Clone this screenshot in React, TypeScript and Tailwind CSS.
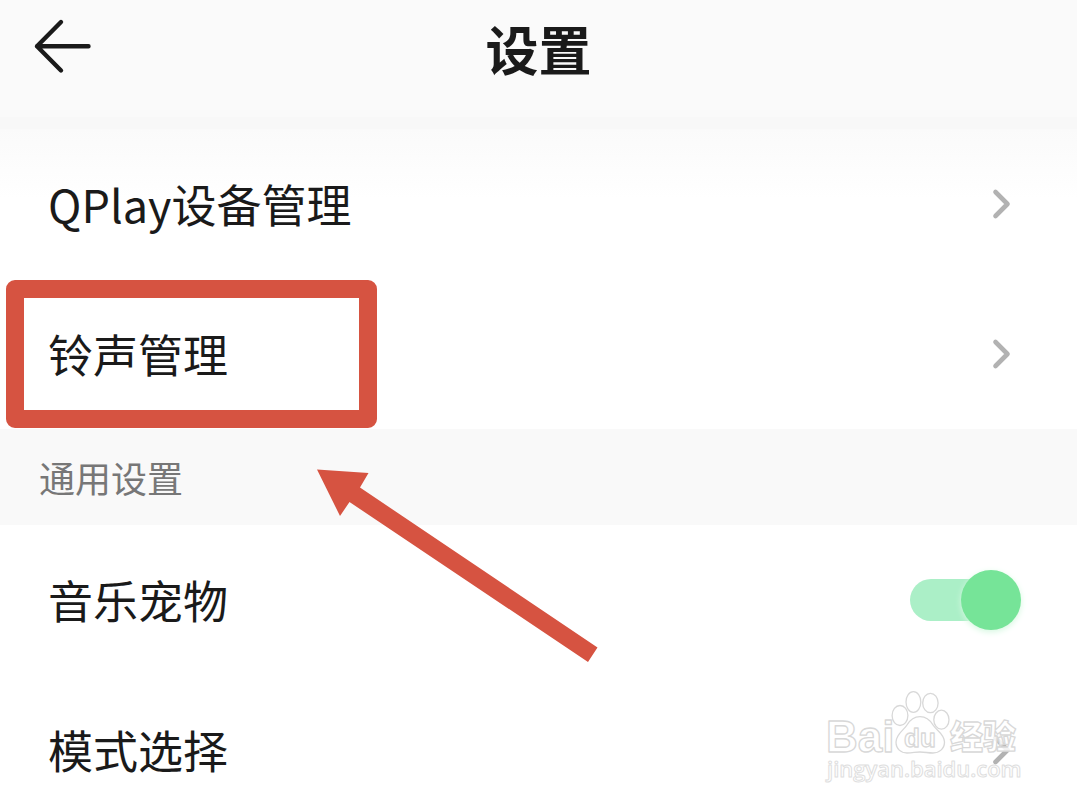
import clsx from "clsx";

const settingGroups = [
  {
    title: null,
    items: [
      { label: "QPlay设备管理", type: "link", marked: false },
      { label: "铃声管理", type: "link", marked: true },
    ],
  },
  {
    title: "通用设置",
    items: [
      { label: "音乐宠物", type: "switch", marked: false },
      { label: "模式选择", type: "link", marked: false },
    ],
  },
];

function Chevron() {
  return (
    <svg
      viewBox="0 0 40 40"
      className="size-10 shrink-0"
      fill="none"
      stroke="#b2b2b2"
      strokeWidth="4.6"
      strokeLinecap="round"
      strokeLinejoin="round"
      aria-hidden="true"
    >
      <path d="M14.500 8 26.500 20 14.500 32" />
    </svg>
  );
}

function Header() {
  return (
    <header className="relative flex h-[117px] items-start justify-center bg-[#fafafa] pt-2.5">
      <button
        type="button"
        aria-label="返回"
        className="absolute left-8 top-4 size-[60px] cursor-pointer"
      >
        <svg
          viewBox="0 0 60 60"
          className="size-full"
          fill="none"
          stroke="#1a1a1a"
          strokeWidth="4.4"
          strokeLinecap="round"
          strokeLinejoin="round"
        >
          <path d="M29 6 5 30.300 29 54.500M5 30.300H56.500" />
        </svg>
      </button>
      <h1 className="text-[53px] leading-[76px] font-bold">设置</h1>
    </header>
  );
}

function SettingRow({ label, type, marked }: { label: string; type: string; marked: boolean }) {
  const rowClass = clsx(
    "relative flex h-[150px] items-center justify-between pl-12 pr-14 text-[45px] leading-[66px]"
  );

  if (type === "switch") {
    return (
      <label className={rowClass}>
        <span>{label}</span>
        <input
          type="checkbox"
          role="switch"
          defaultChecked
          className="relative h-[60px] w-[111px] shrink-0 cursor-pointer appearance-none before:absolute before:left-0 before:top-[9px] before:h-[42px] before:w-[100px] before:rounded-full before:bg-gray-200 after:absolute after:left-0 after:top-0 after:size-[60px] after:rounded-full after:bg-gray-400 checked:before:bg-[#abefc7] checked:after:left-auto checked:after:right-0 checked:after:bg-[#76e498] checked:after:shadow-[0_2px_6px_#d5f8e0]"
        />
      </label>
    );
  }

  return (
    <a href="#" className={rowClass}>
      <span>{label}</span>
      <Chevron />
      {marked && (
        <span className="absolute left-[6px] top-px h-[148px] w-[371px] rounded-[9px] border-[18px] border-[#d65341]" />
      )}
    </a>
  );
}

function Arrow() {
  return (
    <svg
      viewBox="0 0 290 200"
      className="pointer-events-none absolute left-[312px] top-[36px] z-10 h-[200px] w-[290px]"
      fill="#d65341"
      aria-hidden="true"
    >
      <path d="M5 4.500 56.500 8 48 22.500 285.500 182.500 276 197 37.500 37 28 51Z" />
    </svg>
  );
}

function Watermark() {
  return (
    <svg
      viewBox="0 0 210 100"
      className="pointer-events-none absolute bottom-[19px] right-[47px] z-10 h-[100px] w-[210px]"
      fill="#ffffff"
      fillOpacity="0.85"
      stroke="#d8d8d8"
      strokeWidth="1.3"
      strokeLinejoin="round"
    >
      <ellipse cx="80" cy="27.500" rx="7.900" ry="10" />
      <ellipse cx="93.400" cy="14" rx="7.400" ry="10.300" />
      <ellipse cx="110.400" cy="15" rx="7.700" ry="9.700" />
      <ellipse cx="121.400" cy="31.700" rx="7.600" ry="9.500" />
      <path d="M100 28.700C106 28.700 110 32 113 37 116 42 124.500 46 124.500 54 124.500 61 119 65 113 65 108 65 105 64 100 64 95 64 93 65 87 65 81 65 76 61 76 54 76 46 84 42 87 37 90 32 94 28.700 100 28.700Z" />
      <text x="6" y="64" fontSize="44" fontWeight="700" fontFamily="Liberation Sans, sans-serif">
        Bai
      </text>
      <text x="84" y="59" fontSize="26" fontWeight="700" fontFamily="Liberation Sans, sans-serif">
        du
      </text>
      <text x="130" y="61" fontSize="33" fontWeight="900" fontFamily="Noto Sans CJK SC, sans-serif">
        经验
      </text>
      <text
        x="7"
        y="89"
        fontSize="22"
        fontWeight="600"
        stroke="#dedede"
        strokeWidth="1"
        fontFamily="Open Sans, sans-serif"
      >
        jingyan.baidu.com
      </text>
    </svg>
  );
}

function App() {
  return (
    <div className="relative h-screen overflow-hidden bg-white font-['Noto_Sans_CJK_SC',sans-serif] text-[#1a1a1a]">
      <Header />
      <div className="h-3 bg-[#f8f8f8]" />
      <main className="bg-linear-to-b from-[#fafafa] to-white to-10%">
        {settingGroups.map((group, i) => (
          <section key={i}>
            {group.title && (
              <div className="relative flex h-24 items-center bg-[#f9f9f9] pl-[39px]">
                <h2 className="text-[36px] leading-[52px] text-[#777777]">{group.title}</h2>
                <Arrow />
              </div>
            )}
            {group.items.map((item) => (
              <SettingRow key={item.label} {...item} />
            ))}
          </section>
        ))}
      </main>
      <Watermark />
    </div>
  );
}

export default App;
